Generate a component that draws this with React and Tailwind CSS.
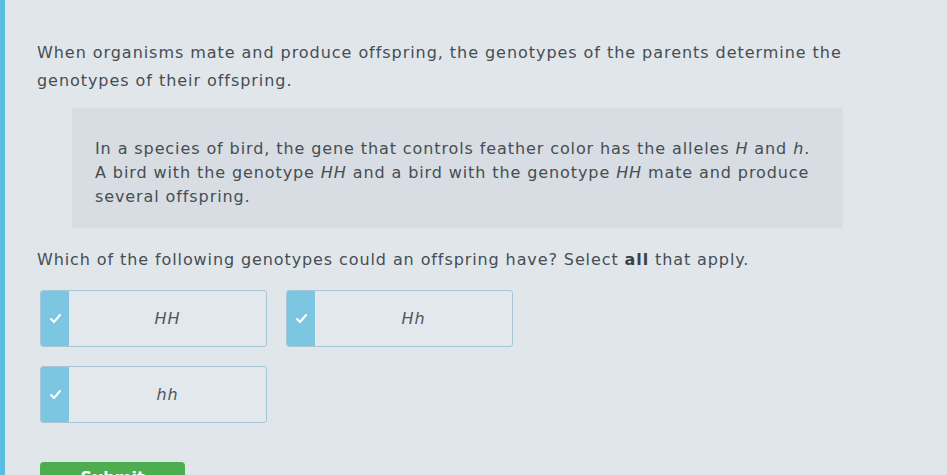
import { useState } from 'react'

const OPTIONS = ['HH', 'Hh', 'hh']

function Check() {
  return (
    <svg width="11" height="9" viewBox="0 0 11 9" fill="none">
      <polyline points="1,5 4,8 10,1" stroke="#fff" strokeWidth="2" strokeLinecap="round" strokeLinejoin="round" />
    </svg>
  )
}

function Option({ label, checked, onToggle }) {
  return (
    <button
      onClick={onToggle}
      className="flex h-[57px] overflow-hidden rounded-[3px] border border-[#a7c7d6] bg-[#e3e8ec] text-left"
    >
      <div className="flex w-[28px] items-center justify-center bg-[#7cc6e1]">
        {checked && <Check />}
      </div>
      <div className="flex flex-1 items-center justify-center text-[16px] italic tracking-[0.9px] text-[#50575d]">
        {label}
      </div>
    </button>
  )
}

export default function App() {
  const [checked, setChecked] = useState({ HH: true, Hh: true, hh: true })

  return (
    <div
      className="flex h-[475px] w-[947px] overflow-hidden bg-[#e1e6eb] text-[#464d53]"
      style={{ fontFamily: '"DejaVu Sans", Verdana, sans-serif' }}
    >
      <div className="w-[5px] shrink-0 bg-[#5bbddf]" />

      <div className="pl-[32px] pt-[39px]">
        {/* 도입 문단 */}
        <p className="w-[840px] text-[16px] leading-[28px] tracking-[0.95px]">
          When organisms mate and produce offspring, the genotypes of the parents determine the
          genotypes of their offspring.
        </p>

        {/* 문제 상황 박스 */}
        <div className="ml-[35px] mt-[13px] h-[120px] w-[771px] rounded-[2px] bg-[#d7dde2] pl-[23px] pt-[29px] text-[16px] leading-[24px] tracking-[0.9px]">
          In a species of bird, the gene that controls feather color has the alleles <i>H</i> and <i>h</i>.
          <br />
          A bird with the genotype <i>HH</i> and a bird with the genotype <i>HH</i> mate and produce
          <br />
          several offspring.
        </div>

        <p className="mt-[18px] text-[16px] leading-[28px] tracking-[0.9px]">
          Which of the following genotypes could an offspring have? Select <b className="text-[#3a4146]">all</b> that apply.
        </p>

        {/* 선택지 */}
        <div className="mt-[16px] ml-[3px] grid w-[473px] grid-cols-2 gap-x-[19px] gap-y-[19px]">
          {OPTIONS.map(o => (
            <Option
              key={o}
              label={o}
              checked={checked[o]}
              onToggle={() => setChecked(c => ({ ...c, [o]: !c[o] }))}
            />
          ))}
        </div>

        <button className="ml-[3px] mt-[39px] flex h-[48px] w-[145px] items-start justify-center rounded-[4px] bg-[#4cae4f] pt-[6px] text-[16px] font-bold leading-[20px] text-white">
          Submit
        </button>
      </div>
    </div>
  )
}
